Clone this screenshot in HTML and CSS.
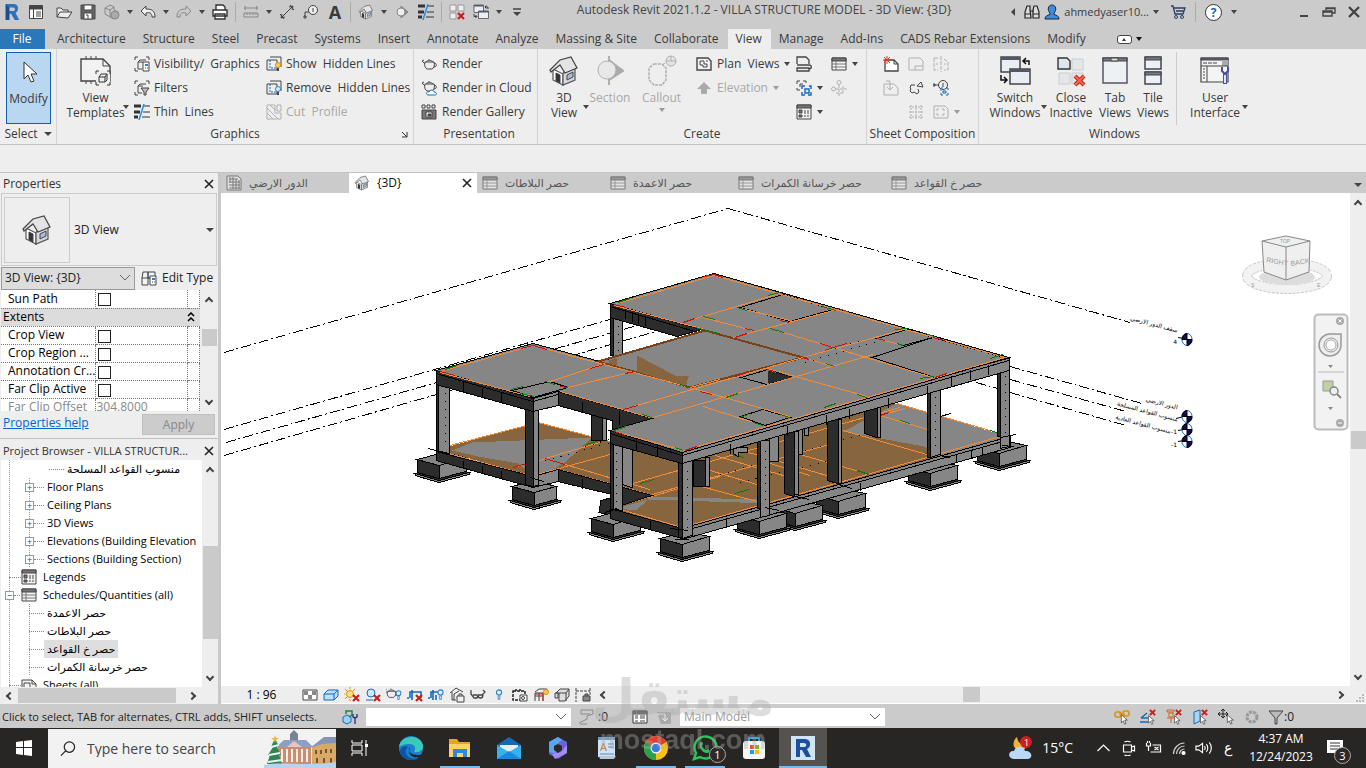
FILE: index.html
```html
<!DOCTYPE html>
<html lang="en">
<head>
    <meta charset="UTF-8">
    <meta name="viewport" content="width=device-width, initial-scale=1.0">
    <title>Autodesk Revit 2021.1.2 - VILLA STRUCTURE MODEL</title>
    <link rel="stylesheet" href="styles.css">
</head>
<body>
    <!-- shared icons -->
    <svg class="defs" aria-hidden="true">
        <symbol id="house" viewBox="0 0 32 32">
            <path d="M5 14v11l10 5V19z" fill="#fff" stroke="#555" stroke-width="1.2"/>
            <path d="M15 19v11l12-5V13l-5-7z" fill="#d5d9df" stroke="#555" stroke-width="1.2"/>
            <path d="M2 15L12 5 23 2l6 11-12 5-5-8-9 7z" fill="#e4e4e4" stroke="#444" stroke-width="1.2"/>
            <path d="M8 18l4 2v8l-4-2z" fill="#333"/>
            <path d="M19 20l6-3v5l-6 3z" fill="#a9bdd8"/>
        </symbol>
        <symbol id="sched" viewBox="0 0 16 16">
            <path d="M1 2h14v12H1z" fill="#f4f4f4" stroke="#444"/><path d="M1 2h14v3H1z" fill="#777" stroke="#444"/>
            <path d="M1 8h14M1 11h14M5 5v9" stroke="#777"/>
        </symbol>
        <symbol id="thin" viewBox="0 0 16 16">
            <path d="M0 2h7M0 8h6M0 13h4" stroke="#333" stroke-width="3"/><path d="M10 2h6M9 8h7M8 13h8" stroke="#333"/>
            <path d="M10 0L5 16" stroke="#2a8de0" stroke-width="1.5"/>
        </symbol>
        <symbol id="legend" viewBox="0 0 16 16">
            <path d="M1 1h14v14H1z" fill="#f2f2f2" stroke="#444"/><path d="M1 1h14v3H1z" fill="#777"/>
            <path d="M3 6h3v3H3zM3 11h3v2H3z" fill="#777"/><path d="M8 7h2m1 0h2M8 9h2m1 0h2M8 12h2m1 0h2" stroke="#444"/>
        </symbol>
        <symbol id="teapot" viewBox="0 0 16 16">
            <path d="M4 6c-1 3 0 6 2 7h5c2-1 3-4 2-7z" fill="#eee" stroke="#444"/><path d="M4 8L1 5M1 5l2-1M13 7c3 0 3 4 0 4M5 6c1-2 6-2 7 0M8 4v-1" stroke="#444"/>
        </symbol>
        <symbol id="x-red" viewBox="0 0 8 8"><path d="M1 1l6 6M7 1L1 7" stroke="#c81e1e" stroke-width="2.2"/></symbol>
        <symbol id="cursor" viewBox="0 0 12 16"><path d="M2 1v12l3-3 2 5 2-1-2-5h4z" fill="#fff" stroke="#333"/></symbol>
        <symbol id="bulb" viewBox="0 0 8 14"><circle cx="4" cy="4" r="3" fill="#dff0ff" stroke="#2a7fc8" stroke-width="1.3"/><path d="M3 8h2v4H3z" fill="#fff" stroke="#2a7fc8"/></symbol>
        <symbol id="switch" viewBox="0 0 32 32">
            <path d="M2 2h19v15H2z" fill="#e8eef4" stroke="#444" stroke-width="1.5"/><path d="M2 2h19v3H2z" fill="#556" stroke="none"/>
            <path d="M11 14h20v15H11z" fill="#e8eef4" stroke="#444" stroke-width="1.5"/><path d="M11 14h20v3H11z" fill="#556" stroke="none"/>
            <path d="M30 10V6h-6M27 3l-3 3 3 3M2 20v5h5M5 22l3 3-3 3" stroke="#111" stroke-width="1.5"/>
        </symbol>
        <symbol id="winlist" viewBox="0 0 16 16"><path d="M1 2h14v12H1z" fill="#fff" stroke="#333"/><path d="M1 2h14v3H1z" fill="#555"/><path d="M3 7h3M8 7h5M3 9h3M8 9h5M3 12h3M8 12h5" stroke="#444"/></symbol>
    </svg>

    <header class="titlebar">
        <div class="qat">
            <button class="tool" aria-label="Revit"><svg class="icon logo" viewBox="0 0 20 20"><path d="M3 1h9c6 0 6 8 2 10l4 8h-5l-4-7H7v7H3z" fill="#2b74bd"/><path d="M7 5h4c3 0 3 4 0 4H7z" fill="#cbcbcb"/><path d="M3 1l4 4v14H3z" fill="#1b4f8f"/></svg></button>
            <button class="tool" aria-label="Home"><svg class="icon" viewBox="0 0 16 16"><path d="M1.500 1.500h13v13h-13z" fill="#fff"/><path d="M2 2h12v3H2z" fill="#444"/><path d="M5.500 5v9M8 8h5M8 10h5M8 12h5"/></svg></button>
            <button class="tool open" aria-label="Open"><svg class="icon" viewBox="0 0 16 16"><path d="M1 13V4h4l2 2h5v2M1 13l3-5h12l-4 6z" fill="#eee"/></svg></button>
            <button class="tool" aria-label="Save"><svg class="icon" viewBox="0 0 16 16"><path d="M1 1h14v14H1z" fill="#666"/><path d="M4 1h8v5H4zM4 9h8v6H4z" fill="#fff"/><path d="M6 11h2v4"/></svg></button>
            <button class="tool" aria-label="Synchronize"><svg class="icon dim" viewBox="0 0 16 16"><path d="M1 4l5-3 4 2v3l4 2v5l-4 2-4-2-5-3zM6 6v7M1 4l5 2 4-3"/><circle cx="11" cy="11" r="4" fill="#aaa"/></svg></button>
            <i class="caret-slot"></i>
            <button class="tool" aria-label="Undo"><svg class="icon" viewBox="0 0 16 16"><path d="M6 2L1 7l5 5V9c4-1 6 0 6 4h3c0-6-3-8-9-8z" fill="#eee"/></svg></button>
            <i class="caret-slot"></i>
            <button class="tool" aria-label="Redo"><svg class="icon dim" viewBox="0 0 16 16"><path d="M10 2l5 5-5 5V9c-4-1-6 0-6 4H1c0-6 3-8 9-8z"/></svg></button>
            <i class="caret-slot"></i>
            <button class="tool" aria-label="Print"><svg class="icon" viewBox="0 0 16 16"><path d="M4 6V1h7l2 2v3M1 6h14v6H1zM3 10h10v5H3z" fill="#fff" stroke="#333" stroke-width="1.4"/></svg></button>
            <i class="sep"></i>
            <button class="tool" aria-label="Measure"><svg class="icon dim" viewBox="0 0 16 16"><path d="M1 4h14M3 2L1 4l2 2M13 2l2 2-2 2M1 9h14v4H1zM4 9v2M7 9v2M10 9v2M13 9v2"/></svg></button>
            <i class="caret-slot"></i>
            <button class="tool" aria-label="Aligned Dimension"><svg class="icon" viewBox="0 0 16 16"><path d="M2 14L14 2M1 10l4 5M11 1l4 5M2 14l1-4M2 14l4-1M14 2l-4 1M14 2l-1 4"/></svg></button>
            <button class="tool" aria-label="Tag"><svg class="icon" viewBox="0 0 16 16"><circle cx="10" cy="6" r="4.500" fill="#eee"/><path d="M10 4v4M6 8H2v5M1 12h2v2H1z"/></svg></button>
            <button class="tool letter" aria-label="Text">A</button>
            <i class="sep"></i>
            <button class="tool" aria-label="3D View"><svg class="icon"><use href="#house"/></svg></button>
            <i class="caret-slot"></i>
            <button class="tool" aria-label="Section"><svg class="icon dim" viewBox="0 0 16 16"><path d="M7 2l7 6-7 6z" fill="#888"/><circle cx="7" cy="8" r="4" fill="#eee"/></svg></button>
            <button class="tool" aria-label="Thin Lines"><svg class="icon"><use href="#thin"/></svg></button>
            <i class="sep"></i>
            <button class="tool" aria-label="Close Inactive"><svg class="icon" viewBox="0 0 16 16"><path d="M1 1h6v6H1zM9 1h6v6H9zM1 9h6v6H1z" stroke="#999" fill="#eee"/><use href="#x-red" x="8" y="8" width="8" height="8"/></svg></button>
            <button class="tool" aria-label="Switch Windows"><svg class="icon"><use href="#switch"/></svg></button>
            <i class="caret-slot"></i>
            <button class="tool" aria-label="Customize"><svg class="icon" viewBox="0 0 16 16"><path d="M4 5h8" stroke-width="1.5"/><path d="M4 8h8l-4 4z" fill="#444" stroke="none"/></svg></button>
        </div>
        <h1 class="doc-title">Autodesk Revit 2021.1.2 - VILLA STRUCTURE MODEL - 3D View: {3D}</h1>
        <div class="account">
            <i class="caret-left"></i>
            <button class="tool" aria-label="Search"><svg class="icon" viewBox="0 0 16 16"><path d="M3 2h3v4l1 8H1V8zM10 2h3l2 6v6H9V6z" fill="#ddd" stroke="#222" stroke-width="1.2"/><path d="M6 7h4M1 10h6M9 10h6" stroke="#222"/></svg></button>
            <button class="user"><svg class="icon" viewBox="0 0 16 16"><path d="M1 15c0-3 3-4 5-4.500V9c-3-3-2-8 2-8s5 5 2 8v1.500c2 .5 5 1.500 5 4.500z" fill="#3b8de0" stroke="#223"/></svg>ahmedyaser10...<i class="caret"></i></button>
            <button class="tool cart" aria-label="App Store"><svg class="icon" viewBox="0 0 16 16"><path d="M1 2h2l2 8h8l2-6H4M6 7h8" stroke="#2c3f66" stroke-width="1.3"/><circle cx="6" cy="13" r="1.500" stroke="#2c3f66"/><circle cx="12" cy="13" r="1.500" stroke="#2c3f66"/></svg></button>
            <i class="sep"></i>
            <button class="help" aria-label="Help">?</button>
            <i class="caret"></i>
            <span class="win-buttons">
                <button class="tool" aria-label="Minimize"><svg class="icon" viewBox="0 0 16 16"><path d="M4 12h8" stroke-width="2"/></svg></button>
                <button class="tool" aria-label="Restore"><svg class="icon" viewBox="0 0 16 16"><path d="M5 6V4h9v5h-3M2 7h9v5H2zM2 8h9M5 4.500h9" stroke-width="1.400"/></svg></button>
                <button class="tool" aria-label="Close"><svg class="icon" viewBox="0 0 16 16"><path d="M3 3l10 10M13 3L3 13" stroke-width="2.400"/></svg></button>
            </span>
        </div>
    </header>

    <nav class="tabs">
        <button class="tab file">File</button>
        <button class="tab">Architecture</button>
        <button class="tab">Structure</button>
        <button class="tab">Steel</button>
        <button class="tab">Precast</button>
        <button class="tab">Systems</button>
        <button class="tab">Insert</button>
        <button class="tab">Annotate</button>
        <button class="tab">Analyze</button>
        <button class="tab">Massing &amp; Site</button>
        <button class="tab">Collaborate</button>
        <button class="tab active">View</button>
        <button class="tab">Manage</button>
        <button class="tab">Add-Ins</button>
        <button class="tab">CADS Rebar Extensions</button>
        <button class="tab">Modify</button>
        <button class="collapse" aria-label="Minimize ribbon"><span class="collapse-box"></span><i class="caret dark"></i></button>
    </nav>

    <div class="ribbon">
        <section class="panel select-panel">
            <div class="panel-body">
                <button class="big modify"><svg class="icon32" viewBox="0 0 32 32"><path d="M11 6v17l4-4 3 7 3-1-3-7h6z" fill="#fff" stroke="#333"/></svg><span>Modify</span></button>
            </div>
            <h2 class="panel-title">Select <i class="caret wide"></i></h2>
        </section>
        <section class="panel graphics">
            <div class="panel-body">
                <button class="big templates"><svg class="icon32" viewBox="0 0 32 32"><path d="M1 4h22l7 7v15H1z" fill="#f2f2f2" stroke="#444" stroke-width="1.400"/><path d="M23 4v7h7M6 4V1M11 4V1M16 4V1M6 26v3M11 26v3" stroke="#444"/><path d="M16 16h14v14H16z" fill="#eee" stroke="none"/><path d="M16 19v-3h3M27 16h3v3M30 27v3h-3M19 30h-3v-3M19 22l2-3h6v6l-2 2h-6zM19 22h6v5M25 22l2-3" stroke="#333"/></svg><span>View<br>Templates</span></button>
                <i class="caret low"></i>
                <div class="rows vg">
                    <button class="row"><svg class="icon" viewBox="0 0 16 16"><path d="M1 4V1h3M12 1h3v3M1 12v3h3M4 6l2-2h6M4 6v7h4M4 6h5"/><path d="M9 6h6v9H9z" fill="#fff"/><path d="M11 8h3v2h-3z" fill="#2a7fc8" stroke="none"/><path d="M11 12h1m1 0h1"/></svg>Visibility/ &nbsp;Graphics</button>
                    <button class="row"><svg class="icon" viewBox="0 0 16 16"><path d="M1 4V1h3M12 1h3v3M1 12v3h3M4 6l2-2h6M4 6v7h4M4 6h5"/><path d="M7 8h8l-3 4v3h-2v-3z" fill="#bbb"/></svg>Filters</button>
                    <button class="row"><svg class="icon"><use href="#thin"/></svg>Thin &nbsp;Lines</button>
                </div>
                <div class="rows">
                    <button class="row"><svg class="icon" viewBox="0 0 16 16"><path d="M1 4h10v10H1zM4 1h11v10" fill="#eee"/><path d="M4 4v8h6" stroke="#1269c0" stroke-dasharray="2 1"/><circle cx="12" cy="9" r="2.500" fill="#ffd24d" stroke="#e0860c"/><path d="M12 12v3" stroke-width="2"/></svg>Show &nbsp;Hidden Lines</button>
                    <button class="row"><svg class="icon" viewBox="0 0 16 16"><path d="M1 4h10v10H1zM4 1h11v10" fill="#eee"/><path d="M4 4v8h6" stroke="#1269c0" stroke-dasharray="2 1"/><circle cx="12" cy="9" r="2.500" fill="#dff0ff" stroke="#2a7fc8"/><path d="M12 12v3" stroke-width="2"/></svg>Remove &nbsp;Hidden Lines</button>
                    <button class="row" disabled><svg class="icon faint" viewBox="0 0 16 16"><path d="M1 1h8v8h6v6H1zM11 1h4v6h-4zM1 4l11 11M1 9l6 6M4 1l5 5"/></svg>Cut &nbsp;Profile</button>
                </div>
            </div>
            <h2 class="panel-title">Graphics <svg class="launcher" viewBox="0 0 8 8"><path d="M1 2l5 5M6 2v5H1" stroke="#333" fill="none"/></svg></h2>
        </section>
        <section class="panel presentation">
            <div class="panel-body">
                <div class="rows">
                    <button class="row"><svg class="icon"><use href="#teapot"/></svg>Render</button>
                    <button class="row"><svg class="icon" viewBox="0 0 16 16"><use href="#teapot" y="-2" width="16" height="16"/><path d="M7 15c-3-1-1-4 1-3 1-3 5-2 5 0 3 0 3 3 1 3z" fill="#fff" stroke="#1269c0"/></svg>Render in Cloud</button>
                    <button class="row"><svg class="icon" viewBox="0 0 16 16"><path d="M1 1h3v3H1zM6 1h3v3H6zM11 1h3v3h-3z"/><path d="M1 6h14v9H1z" fill="#777"/><path d="M5 8h6v5H5z" fill="#fff"/><path d="M7 10h3v2H7z" fill="#444"/></svg>Render Gallery</button>
                </div>
            </div>
            <h2 class="panel-title">Presentation</h2>
        </section>
        <section class="panel create">
            <div class="panel-body">
                <button class="big view3d"><svg class="icon32"><use href="#house"/></svg><span>3D<br>View</span></button>
                <i class="caret low"></i>
                <button class="big section" disabled><svg class="icon32 faint" viewBox="0 0 32 32"><path d="M15 1v6l13 8-13 8v7" fill="none" stroke-width="2"/><path d="M16 5l14 11-14 9z" fill="#aaa"/><circle cx="13" cy="15" r="9" fill="#e8e8e8"/></svg><span>Section</span></button>
                <button class="big callout" disabled><svg class="icon32 faint" viewBox="0 0 32 32"><path d="M8 9h8l4 4v12l-4 5H8l-5-5V13z" stroke-dasharray="3 1" stroke-width="1.500"/><circle cx="25" cy="6" r="5" fill="#e4e4e4"/><path d="M20 6h10M25 1v5M19 8l-3 2"/></svg><span>Callout</span><i class="caret pale"></i></button>
                <div class="rows plans">
                    <button class="row"><svg class="icon" viewBox="0 0 16 16"><path d="M1 2h11l3 3v9H1z" fill="#f4f4f4" stroke-width="1.400"/><path d="M4 5h4v3h3v3H7V9H4zM10 5h2"/></svg>Plan &nbsp;Views<i class="caret"></i></button>
                    <button class="row" disabled><svg class="icon" viewBox="0 0 16 16"><path d="M8 2l7 7h-4v5H5V9H1z" fill="#aaa" stroke="none"/></svg>Elevation<i class="caret pale"></i></button>
                </div>
                <div class="rows narrow">
                    <button class="row" aria-label="Drafting View"><svg class="icon" viewBox="0 0 16 16"><path d="M1 8V1h9l3 3v4M1 9h12M1 12h12v3H1zM13 9c3 0 3 4 0 4" fill="#eee" stroke-width="1.300"/></svg></button>
                    <button class="row" aria-label="Duplicate View"><svg class="icon" viewBox="0 0 16 16"><path d="M1 4V1h3M7 1h3v2M1 8v2h3M4 4h3M4 4v3"/><path d="M6 9V6h3M13 6h2v3M15 12v3h-3M9 15H6v-3M9 9h4v4H9z" stroke="#1269c0" stroke-width="1.400"/></svg><i class="caret"></i></button>
                    <button class="row" aria-label="Legends"><svg class="icon"><use href="#legend"/></svg><i class="caret"></i></button>
                </div>
                <div class="rows narrow">
                    <button class="row" aria-label="Schedules"><svg class="icon"><use href="#sched"/></svg><i class="caret"></i></button>
                    <button class="row" aria-label="Scope Box" disabled><svg class="icon faint" viewBox="0 0 16 16"><circle cx="8" cy="2.500" r="2"/><circle cx="2.500" cy="9" r="2"/><path d="M8 5v11M5 9h11M5 13h7M12 6v7" stroke-dasharray="3 1"/></svg></button>
                </div>
            </div>
            <h2 class="panel-title">Create</h2>
        </section>
        <section class="panel sheet">
            <div class="panel-body">
                <button class="cell" aria-label="Sheet"><svg class="icon" viewBox="0 0 16 16"><path d="M2 15V4h9l4 4v7z" fill="#fff" stroke-width="1.300"/><path d="M11 4v4h4"/><path d="M4 0v8M0 4h8M1 1l6 6M7 1L1 7" stroke="#d2451e"/></svg></button>
                <button class="cell" aria-label="Title Block" disabled><svg class="icon faint" viewBox="0 0 16 16"><path d="M1 2h11l3 3v9H1zM7 10h8M7 10v4"/></svg></button>
                <button class="cell" aria-label="Matchline" disabled><svg class="icon faint" viewBox="0 0 16 16"><path d="M1 2h4M1 2v12h4M11 3l4 3v8h-4M8 0v16M11 8h2M3 8h2" stroke-dasharray="4 1"/></svg></button>
                <button class="cell" aria-label="View Reference" disabled><svg class="icon faint" viewBox="0 0 16 16"><path d="M1 4h10l4 4v7H1zM3 1h4v8M4 7l3 3 3-3"/></svg></button>
                <button class="cell" aria-label="Revisions"><svg class="icon" viewBox="0 0 16 16"><path d="M7 5H3L2 8l1 1-1 2 2 2 2-1 3 2 2-2-1-3M9 6l4-4 2 5z"/></svg></button>
                <button class="cell" aria-label="Viewports"><svg class="icon" viewBox="0 0 16 16"><circle cx="10" cy="5" r="4.500"/><path d="M10 3v4M1 5h5M0 4h2v2H0z"/><path d="M8 11V8h2M13 8h2v2M15 13v2h-2M10 15H8v-2M10 11h3v2h-3z" fill="#eee" stroke="#1269c0"/></svg></button>
                <button class="cell" aria-label="Guide Grid" disabled><svg class="icon faint" viewBox="0 0 16 16"><path d="M1 3h14M1 8h14M1 13h14M3 1v14M8 1v14M13 1v14" stroke-dasharray="2 1"/></svg></button>
                <button class="cell caret-cell" aria-label="Sheet Views" disabled><svg class="icon faint" viewBox="0 0 16 16"><path d="M1 2h11l3 3v9H1zM4 7V5h2M9 5h2v2M11 9v2H9M6 11H4V9"/></svg><i class="caret pale"></i></button>
            </div>
            <h2 class="panel-title">Sheet Composition</h2>
        </section>
        <section class="panel windows">
            <div class="panel-body">
                <button class="big switch"><svg class="icon32"><use href="#switch"/></svg><span>Switch<br>Windows</span></button>
                <i class="caret low"></i>
                <button class="big inactive"><svg class="icon32" viewBox="0 0 32 32"><path d="M17 4h11v11H17zM4 18h11v11H4zM17 18h11v11H17z" fill="#e4e7ea" stroke="#ccc"/><path d="M3 3h9l3 3v8H3z" fill="#dde6ee" stroke="#333" stroke-width="1.400"/><path d="M20 21l9 9M29 21l-9 9" stroke="#c02a1c" stroke-width="4"/><path d="M20 21l9 9M29 21l-9 9" stroke="#f26450" stroke-width="2"/></svg><span>Close<br>Inactive</span></button>
                <button class="big tabv"><svg class="icon32" viewBox="0 0 32 32"><path d="M4 3h24v25H4z" fill="#eef1f4" stroke="#556" stroke-width="1.500"/><path d="M4 3h24v3H4z" fill="#778"/><path d="M12 3h7v3h-7z" fill="#ddd"/></svg><span>Tab<br>Views</span></button>
                <button class="big tile"><svg class="icon32" viewBox="0 0 32 32"><path d="M8 2h16v12H8zM8 17h16v12H8z" fill="#eef1f4" stroke="#445" stroke-width="1.500"/><path d="M8 2h16v3H8zM8 17h16v3H8z" fill="#778"/></svg><span>Tile<br>Views</span></button>
                <i class="divider"></i>
                <button class="big ui"><svg class="icon32" viewBox="0 0 32 32"><path d="M2 3h27v24H2z" fill="#f4f4f4" stroke="#444" stroke-width="1.200"/><path d="M2 3h27v2H2z" fill="#667"/><path d="M23 5h6v6h-6z" fill="#aaa" stroke="none"/><path d="M2 11h27M8 11v16M4 8h4m1 0h4m1 0h4M4 14h2M4 17h2M4 20h2M4 23h2" stroke="#444"/><path d="M26 18v11" stroke="#4a4f9a" stroke-width="4"/><path d="M26 18v10" stroke="#dfe3f4" stroke-width="2"/><path d="M23 12v4l3 3 3-3v-4" stroke="#4a4f9a" stroke-width="2"/></svg><span>User<br>Interface</span></button>
                <i class="caret low"></i>
            </div>
            <h2 class="panel-title">Windows</h2>
        </section>
    </div>
    <div class="options-bar"></div>

    <main class="workspace">
        <aside class="side">
            <section class="properties">
                <header class="palette-head"><h2>Properties</h2><button class="close" aria-label="Close Properties"><svg viewBox="0 0 10 10"><path d="M1 1l8 8M9 1L1 9"/></svg></button></header>
                <button class="type-selector"><span class="thumb"><svg class="icon32"><use href="#house"/></svg></span>3D View<i class="caret wide"></i></button>
                <div class="instance">
                    <select aria-label="Instance"><option>3D View: {3D}</option></select>
                    <button class="edit-type"><svg class="icon" viewBox="0 0 16 16"><path d="M1 8l1-6h5v13H1zM7 2h7v6H7zM1 8h8" fill="#f4f4f4"/><path d="M9 6h6v9H9z" fill="#fff"/><path d="M11 8h3v2h-3z" fill="#2a7fc8" stroke="none"/><path d="M11 12h1m1 0h1"/></svg>Edit Type</button>
                </div>
                <div class="grid-wrap">
                    <div class="grid-clip">
                    <table class="grid">
                        <tr><th><label for="sun">Sun Path</label></th><td><input type="checkbox" id="sun"></td><td class="assoc"></td></tr>
                        <tr class="group"><th colspan="2">Extents</th><td class="assoc"><svg viewBox="0 0 8 10"><path d="M1 4l3-3 3 3M1 9l3-3 3 3" fill="none" stroke="#000" stroke-width="1.500"/></svg></td></tr>
                        <tr><th><label for="crop">Crop View</label></th><td><input type="checkbox" id="crop"></td><td class="assoc"></td></tr>
                        <tr><th><label for="region">Crop Region ...</label></th><td><input type="checkbox" id="region"></td><td class="assoc"></td></tr>
                        <tr><th><label for="anno">Annotation Cr...</label></th><td><input type="checkbox" id="anno"></td><td class="assoc"></td></tr>
                        <tr><th><label for="far">Far Clip Active</label></th><td><input type="checkbox" id="far"></td><td class="assoc"></td></tr>
                        <tr class="off"><th>Far Clip Offset</th><td>304.8000</td><td class="assoc"></td></tr>
                    </table>
                    </div>
                    <div class="vscroll"><i class="arrow up"></i><i class="thumb-bar short"></i><i class="arrow down"></i></div>
                </div>
                <footer class="prop-foot"><a href="#">Properties help</a><button disabled>Apply</button></footer>
            </section>
            <section class="browser">
                <header class="palette-head"><h2>Project Browser - VILLA STRUCTUR...</h2><button class="close" aria-label="Close Project Browser"><svg viewBox="0 0 10 10"><path d="M1 1l8 8M9 1L1 9"/></svg></button></header>
                <div class="tree-wrap">
                    <ul class="tree">
                        <li class="l3"><i class="dots"></i><span>منسوب القواعد المسلحة</span></li>
                        <li class="l2"><i class="box">+</i><i class="dots"></i><span>Floor Plans</span></li>
                        <li class="l2"><i class="box">+</i><i class="dots"></i><span>Ceiling Plans</span></li>
                        <li class="l2"><i class="box">+</i><i class="dots"></i><span>3D Views</span></li>
                        <li class="l2"><i class="box">+</i><i class="dots"></i><span>Elevations (Building Elevation</span></li>
                        <li class="l2"><i class="box">+</i><i class="dots"></i><span>Sections (Building Section)</span></li>
                        <li class="l1"><i class="dots"></i><svg class="icon"><use href="#legend"/></svg><span>Legends</span></li>
                        <li class="l1 open-node"><i class="box">−</i><i class="dots tiny"></i><svg class="icon"><use href="#sched"/></svg><span>Schedules/Quantities (all)</span></li>
                        <li class="l2 leaf"><i class="dots"></i><span>حصر الاعمدة</span></li>
                        <li class="l2 leaf"><i class="dots"></i><span>حصر البلاطات</span></li>
                        <li class="l2 leaf"><i class="dots"></i><span class="selected">حصر خ القواعد</span></li>
                        <li class="l2 leaf"><i class="dots"></i><span>حصر خرسانة الكمرات</span></li>
                        <li class="l1"><i class="dots"></i><svg class="icon" viewBox="0 0 16 16"><path d="M1 3h10l4 4v8H1z" fill="#f4f4f4"/><path d="M3 6h6v5H3zM11 3v4h4"/></svg><span>Sheets (all)</span></li>
                    </ul>
                    <div class="vscroll"><i class="arrow up"></i><i class="thumb-bar tall"></i><i class="arrow down"></i></div>
                </div>
                <div class="hscroll"><i class="arrow left"></i><i class="thumb-bar"></i><i class="arrow right"></i></div>
            </section>
        </aside>

        <section class="view-area">
            <nav class="view-tabs">
                <button class="vtab"><svg class="icon soft" viewBox="0 0 16 16"><path d="M1 1h11l3 3v11H1z" fill="#eee"/><path d="M3 4h9M3 7h11M3 10h11M3 13h11M4 2v6M7 2v12M10 4v10M13 5v9"/></svg>الدور الارضي</button>
                <button class="vtab active"><svg class="icon"><use href="#house"/></svg>{3D}<span class="close"><svg viewBox="0 0 10 10"><path d="M1 1l8 8M9 1L1 9"/></svg></span></button>
                <button class="vtab"><svg class="icon soft"><use href="#sched"/></svg>حصر البلاطات</button>
                <button class="vtab"><svg class="icon soft"><use href="#sched"/></svg>حصر الاعمدة</button>
                <button class="vtab long"><svg class="icon soft"><use href="#sched"/></svg>حصر خرسانة الكمرات</button>
                <button class="vtab"><svg class="icon soft"><use href="#sched"/></svg>حصر خ القواعد</button>
                <button class="tab-menu" aria-label="Tab list"><i class="caret wide"></i></button>
            </nav>
            <div class="canvas-row">
                <div class="canvas">
                    <svg class="model" viewBox="221 193 1129 492" role="img" aria-label="Villa structure">
                        <defs>
                            <g id="footing">
                                <path d="M-24-8L4-16 30-9 0-1z" class="dk"/>
                                <path d="M-24-8v2L0 1 30-7v-2L0-1z" class="lt"/>
                                <path d="M-22-22L0-16V-3l-22-6z" class="dk"/>
                                <path d="M0-16l27-8v14L0-3z" class="lt"/>
                                <path d="M-22-22L5-29l22 5L0-16z" class="lt"/>
                            </g>
                            <g id="footing-small">
                                <path d="M-24-8L2-15 26-8 0-1z" class="dk"/>
                                <path d="M-24-8v2L0 1 26-6v-2L0-1z" class="lt"/>
                                <path d="M-22-22L0-16V-3l-22-6z" class="dk"/>
                                <path d="M0-16l22-6v13L0-3z" class="lt"/>
                                <path d="M-22-22L0-28l22 6L0-16z" class="lt"/>
                            </g>
                            <g id="level"><ellipse rx="5" ry="6" fill="#fff" stroke="#1470c8"/><path d="M0 0V-6A5 6 0 0 0-5 0zM0 0V6A5 6 0 0 0 5 0z" fill="#140a50"/></g>
                        </defs>
                        <!-- level lines -->
                        <g class="levels">
                            <path d="M224 352L728 208 1130 322"/>
                            <path d="M224 429L610 319"/><path d="M226 442L637 325"/><path d="M224 455L656 331"/>
                            <path d="M1010 366L1142 403"/><path d="M1010 379L1126 411"/><path d="M1010 392L1126 425"/><path d="M976 382l22 6"/>
                        </g>
                        <g class="solid">
                            <use href="#footing" x="439" y="481"/>
                            <use href="#footing-small" x="534" y="508"/>
                            <path d="M601 500l11-3v18l-13-3z" class="dk"/>
                            <use href="#footing" x="613" y="540"/>
                            <use href="#footing" x="838" y="517"/>
                            <use href="#footing" x="795" y="529"/>
                            <use href="#footing" x="759" y="537"/>
                            <use href="#footing" x="930" y="489"/>
                            <use href="#footing" x="999" y="469"/>
                            <use href="#footing" x="682" y="560"/>
                        </g>
                        <!-- ground floor slab -->
                        <path d="M438 449L538 422 610 441 640 430 897 403 1010 437 682 529 610 508 652 495 558 469 533 476z" fill="#86653f"/>
                        <g fill="#868686">
                            <path d="M472 442L592 437 565 462 550 470 533 474 505 462 452 450z"/>
                            <path d="M843 431L897 403 1008 436 940 456 924 446z"/>
                            <path d="M617 508L648 499 636 510zM648 496l110 3 12 4-122-4z"/>
                        </g>
                        <path d="M438 449l80 14 15 11-90-23z" fill="#86653f"/>
                        <g class="orange">
                            <path d="M446 446L538 422 610 441M545 458L600 442M533 475L625 450M565 464L650 489M513 467L550 457M445 452L530 475M562 470L650 494"/>
                            <path d="M617 508L682 527 1000 436M614 507L720 476M622 486L900 407M652 494L840 441M700 467L757 484M715 455L790 477M735 448L830 476M770 463L810 475M800 454L870 474M843 430L927 454M880 415L928 429M897 403L997 432M880 415L905 408M690 483L757 501"/>
                        </g>
                        <path d="M545 458L565 464M513 467l20-6M925 453l8 2M693 486l17-5M880 415l9-3" class="red"/>
                        <path d="M586 444l14-4M640 483l14-4M732 454l12 3M857 470l12 4M900 420l10 3M735 493l14-4M990 430l7 2" class="green"/>
                        <path d="M585 446L650 428M600 441L680 462M720 474l160-45M740 482l90-22M545 460l60-16" class="specks"/>
                        <!-- ground beams -->
                        <g class="solid">
                            <path d="M436 451L533 476V487L436 460z" class="dk"/>
                            <path d="M533 476L558 469V481L533 487z" class="lt"/>
                            <path d="M558 469L652 495 612 508V494L558 481z" class="dk"/>
                            <path d="M591 415h11v25h-11z" class="dk"/><path d="M602 418h4v22h-4z" class="lt"/>
                            <path d="M622 445h10v42l-10-3z" class="lt"/>
                            <path d="M693 460h12v26h-12z" class="dk"/><path d="M705 457h4v29h-4z" class="lt"/>
                            <path d="M733 447h14v5h-9v4l-5-3z" class="lt"/><path d="M769 435h9v26h-9z" class="lt"/>
                            <path d="M798 428h4v26h-4zM804 427h4v8h-4z" class="lt"/>
                            <path d="M864 408h13v29l-13-4z" class="dk"/><path d="M877 406h3v31h-3z" class="lt"/>
                            <path d="M610 508L682 528V538L610 518z" class="dk"/>
                            <path d="M682 528L1010 436V447L682 539z" class="lt"/>
                            <path d="M682 531L1010 439" class="ln"/>
                            <!-- columns -->
                            <path d="M436 383h13v70l-13-3z" class="lt"/><path d="M436 383h2v68h-2z" class="dk"/>
                            <path d="M525 408h8v78l-8-2z" class="dk"/><path d="M533 408h5v77l-5 1z" class="lt"/>
                            <path d="M610 440h12v70l-12-2z" class="lt"/><path d="M610 440h3v69h-3z" class="dk"/>
                            <path d="M678 460h4v77h-4z" class="dk"/><path d="M682 460h10v75l-10 3z" class="lt"/>
                            <path d="M757 440h3v68h-3z" class="dk"/><path d="M760 440h9v75l-9 2z" class="lt"/>
                            <path d="M784 431h10v65l-10-3z" class="dk"/><path d="M794 431h4v63h-4z" class="lt"/>
                            <path d="M827 419h11v64l-11-3z" class="dk"/><path d="M838 419h3v64h-3z" class="lt"/>
                            <path d="M927 391h3v66h-3z" class="dk"/><path d="M930 390h10v64l-10 3z" class="lt"/>
                            <path d="M997 371h3v65h-3z" class="dk"/><path d="M1000 368h9v78l-9 2z" class="lt"/>
                            <path d="M610 316h3v39h-3z" class="dk"/><path d="M613 316h9v38l-9 2z" class="lt"/>
                            <!-- roof beams -->
                            <path d="M436 370L533 398V411L436 384z" class="dk"/>
                            <path d="M533 397L558 391V405L533 411z" class="lt"/>
                            <path d="M558 391L652 418 612 431V420L558 405z" class="dk"/>
                            <path d="M610 430L682 452V463L610 443z" class="dk"/>
                            <path d="M682 452L1009 357V370L682 463z" class="lt"/>
                            <path d="M610 303L702 329 677 336 610 317z" class="dk"/>
                            <!-- roof slab -->
                            <path d="M436 370L533 343 600 361 705 330 610 303 714 273 1009 357 682 452 610 430 652 418 558 391 533 398z" class="lt"/>
                        </g>
                        <path d="M682 455L1009 360M436 373L533 401 558 394M610 433L682 455M610 306l85 25" class="ln"/>
                        <path d="M463 381v10M482 387v10M501 392v10M582 401v11M619 410v14M636 436v13M657 442v13M730 443v10M787 425v10M826 414v10M849 408v10M888 397v10M927 385v10M951 375v10M970 369v10M988 364v10M625 308v10M632 311v10M638 313v10M645 315v10" class="ln"/>
                        <path d="M726 519v8M860 482v8M956 454v8M971 449v8M982 446v8M463 460v8M482 465v8M501 470v8M582 478v10M650 520v8" class="ln"/>
                        <path d="M598 361L705 330 803 357 690 387z" class="recess"/>
                        <path d="M609 360l8-3v8l-8-2zM637 355l38 20h14l-3 10-24-6-25-8z" fill="#86653f"/>
                        <path d="M740 307L783 294 833 309 790 321zM877 338L907 329 933 337 903 345zM872 357L933 337 1008 358 935 377zM740 416L763 409 790 417 765 425zM512 390L550 381 568 387 533 397zM741 377L768 369 793 377 767 384z" class="ln"/>
                        <path d="M768 370L793 377 768 383z" class="hole"/>
                        <g class="orange">
                            <path d="M440 371L533 345 690 387M614 304L714 275 1005 357 684 450 614 431M547 382L605 363M568 387L633 371M623 409L803 357 907 328M653 417L863 357 873 354M440 372L530 396"/>
                            <path d="M683 322L780 293M733 337L837 309M703 317L753 330M770 328L933 377M737 307L790 320M877 338L903 345M803 357L833 366M767 368L867 396M690 387L790 416M703 406L763 425M560 391L650 417M690 387L720 379M614 305L705 329"/>
                        </g>
                        <path d="M521 348l12-3 14 4M440 371l15 4M590 368l14-4M625 373l10-2M623 409l15-4M614 304l12 3M704 276l10-2 9 3M683 322l12-4M735 337l12-4M745 328l9 2M780 320l9 2M820 343l13 4 14-4M877 338l8 2M933 337l12 3M803 357l6 2M735 376l12-4M700 391l12 3M935 377l12-4M560 386l8 1M614 431l10 3M685 450l12-4M767 369l8 2M838 308l10 3" class="red"/>
                        <path d="M445 369l12-4M511 389l12-3M545 381l10 3M520 393l14 3M642 414l10 3M618 302l12-4M703 316l12 3M695 327l24 6M690 387l-10-3M737 307l10 3M768 295l12-3M822 306l14 4M770 328l14 4M825 350l8-3M895 329l12-1M925 333l10 3M897 343l6 2M920 378l14-2M990 358l13-4M826 363l8 3M857 394l10 3M824 407l12-4M726 397l12-4M740 417l8-3M753 422l10 3M780 414l10 3M675 447l8 3M614 430l12-4" class="green"/>
                        <path d="M805 362L880 340M835 348l30-9" class="specks"/>
                        <path d="M445 392v55M616 452v50M687 470v58M765 450v58M935 396v54M1005 375v62M618 325v28" class="specks"/>
                        <path d="M428 448l17 4M530 477l14 4M605 512l12-4M670 528l18 2M765 507l14 3M795 496l14 3M838 484l14 4M940 455l10 2M1000 437l16-3M1002 445l12 1M940 416l11-3M675 539h14" class="ln"/>
                        <g class="marks">
                            <path d="M1178 337l6 1M1176 418l8-2M1178 430l6-1M1178 441l6-1"/>
                            <use href="#level" x="1187" y="339"/><use href="#level" x="1187" y="416"/><use href="#level" x="1187" y="429"/><use href="#level" x="1187" y="441"/>
                            <text x="1177" y="332" transform="rotate(15 1177 332)">سقف الدور الارضي</text><text x="1177" y="343">4</text>
                            <text x="1177" y="409" transform="rotate(15 1177 409)">الدور الارضي</text>
                            <text x="1177" y="421" transform="rotate(15 1177 421)">منسوب القواعد المسلحة</text><text x="1177" y="433">-1</text>
                            <text x="1170" y="433" transform="rotate(15 1170 433)">منسوب القواعد العادية</text><text x="1177" y="446">-1</text>
                        </g>
                    </svg>
                    <div class="viewcube">
                        <svg viewBox="0 0 94 64"><ellipse cx="47" cy="42" rx="40" ry="13" fill="none" stroke="#ccc" stroke-width="10" stroke-dasharray="3 1"/><ellipse cx="47" cy="42" rx="40" ry="13" fill="none" stroke="#f2f2f2" stroke-width="8"/><ellipse cx="47" cy="43" rx="28" ry="8" fill="#ddd"/>
                            <path d="M22 7l24-5 24 5-1 31-23 8-22-8z" fill="#efefef" stroke="#888"/><path d="M22 7l24 6 24-6M46 13v33" fill="none" stroke="#888"/>
                            <g class="cube-text"><text x="26" y="28" transform="rotate(10 26 28)">RIGHT</text><text x="51" y="32" transform="rotate(-10 51 32)">BACK</text><text x="40" y="9" class="tiny">TOP</text><text x="11" y="53" class="tiny">S</text><text x="77" y="53" class="tiny">E</text></g></svg>
                    </div>
                    <div class="navbar">
                        <svg viewBox="0 0 36 118"><rect x="1.500" y="1.500" width="33" height="115" rx="4" fill="#f2f2f2" stroke="#bbb" stroke-width="2"/>
                            <circle cx="27" cy="8" r="4" fill="#aaa"/><path d="M25.500 6.500l3 3m0-3l-3 3" stroke="#fff"/>
                            <path d="M17 21h11v12a11 11 0 1 1-11-12z" fill="#eee" stroke="#999" stroke-width="1.500"/><circle cx="18" cy="32" r="7" fill="none" stroke="#999"/><circle cx="18" cy="32" r="5" fill="#fff" stroke="#aaa"/><path d="M15 52h5l-2.500 3zM15 94h5l-2.500 3z" fill="#888"/>
                            <path d="M5 59h26" stroke="#bbb"/><path d="M10 68h10v10H10z" fill="#c2cfa2" stroke="#999"/><circle cx="21" cy="78" r="4" fill="#eee" stroke="#888" stroke-width="1.500"/><path d="M24 81l4 4" stroke="#888" stroke-width="2"/>
                            <circle cx="27" cy="110" r="4" fill="#aaa"/><path d="M25 110h4" stroke="#fff"/></svg>
                    </div>
                </div>
                <div class="vscroll page"><i class="arrow up"></i><i class="thumb-bar mid"></i><i class="arrow down"></i></div>
            </div>
            <div class="view-control">
                <button class="scale">1 : 96</button>
                <button aria-label="Detail Level"><svg class="icon" viewBox="0 0 16 16"><path d="M1 3h14v10H1z" fill="#fff"/><path d="M2 4h4v4H2zM10 4h4v4h-4zM6 8h4v4H6z" fill="#888" stroke="none"/></svg></button>
                <button aria-label="Visual Style"><svg class="icon blue" viewBox="0 0 16 16"><path d="M1 7l4-4h10v6l-4 4H1zM1 7h10v6M11 7l4-4" fill="#bfe0fa"/></svg></button>
                <button aria-label="Sun Path"><svg class="icon" viewBox="0 0 16 16"><circle cx="6" cy="7" r="3.500" fill="#ffe27a" stroke="#e08a10"/><path d="M6 0v2M6 12v2M0 7h1M1 2l2 2M11 2L9 4M1 12l2-2" stroke="#e08a10"/><use href="#x-red" x="8" y="7" width="8" height="8"/></svg></button>
                <button aria-label="Shadows"><svg class="icon blue" viewBox="0 0 16 16"><circle cx="6" cy="6" r="4" fill="#cfe8fb"/><path d="M1 13h7"/><use href="#x-red" x="8" y="7" width="8" height="8"/></svg></button>
                <button aria-label="Rendering"><svg class="icon" viewBox="0 0 16 16"><use href="#teapot" x="-2" y="-2" width="14" height="16"/><use href="#bulb" x="9" y="3" width="7" height="11"/></svg></button>
                <button aria-label="Crop View"><svg class="icon blue" viewBox="0 0 16 16"><path d="M0 11h2m1 0V5h11M5 3v10M5 5h9v6" stroke-width="1.600"/><use href="#x-red" x="8" y="7" width="8" height="8"/></svg></button>
                <button aria-label="Crop Region"><svg class="icon blue" viewBox="0 0 16 16"><path d="M0 11h2m1 0V5h7M5 3v10M8 8v5" stroke-width="1.600"/><use href="#bulb" x="9" y="2" width="7" height="12"/></svg></button>
                <button aria-label="Lock View"><svg class="icon" viewBox="0 0 16 16"><path d="M1 6l6-5 7 4M3 5v8h4M5 13V7l5-3"/><path d="M8 9h7v6H8zM10 9V7h3v2" fill="#eee"/></svg></button>
                <button aria-label="Hide"><svg class="icon" viewBox="0 0 16 16"><path d="M1 3v4l3 4h3l1-3h4l3-3-2-2M3 8h4M8 8c0 4 5 4 5 0" stroke-width="1.300"/></svg></button>
                <button aria-label="Reveal Hidden"><svg class="icon" viewBox="0 0 16 16"><use href="#bulb" x="4" y="2" width="8" height="12"/></svg></button>
                <button aria-label="View Properties"><svg class="icon" viewBox="0 0 16 16"><path d="M1 4h12v9H1zM4 2v2M8 2v2" stroke="#222" stroke-dasharray="3 1" stroke-width="1.500"/><path d="M8 8h7v6H8z" fill="#fff"/><circle cx="11" cy="11" r="1.500"/></svg></button>
                <button aria-label="Analytical Model"><svg class="icon" viewBox="0 0 16 16"><path d="M2 5l4-3h8v4H2v8M6 6v8M10 6v8M2 9h8"/><path d="M2 7h8v7" stroke="#c82020"/><circle cx="13" cy="5" r="2.500" fill="#ffcf4a" stroke="#e08a10"/></svg></button>
                <button aria-label="Displacement"><svg class="icon" viewBox="0 0 16 16"><path d="M2 6l4-4h9v7l-4 5H5V6zM5 6h7v8M12 6l3-4M1 6h3v5H1z" fill="#ddd"/></svg></button>
                <button aria-label="Constraints"><svg class="icon" viewBox="0 0 16 16"><path d="M1 1v14M15 1v8M1 4h14" stroke-dasharray="3 1"/><path d="M8 9h7v5H8zM10 9V7h3v2" fill="#888"/></svg></button>
                <i class="arrow left"></i>
                <div class="hscroll page"><i class="thumb-bar"></i><i class="arrow right"></i></div>
                <svg class="grip" viewBox="0 0 8 8"><path d="M6 0h2v2H6zM3 3h2v2H3zM6 3h2v2H6zM0 6h2v2H0zM3 6h2v2H3zM6 6h2v2H6z" fill="#bbb"/></svg>
            </div>
        </section>
    </main>

    <div class="status">
        <span class="hint">Click to select, TAB for alternates, CTRL adds, SHIFT unselects.</span>
        <button class="tool" aria-label="Worksets"><svg class="icon" viewBox="0 0 16 16"><path d="M1 8l4-2 4 2v5l-4 2-4-2z" fill="#9bd0f5" stroke="#1a6cb0"/><path d="M4 5V2h6v4l-3 2" stroke="#1a8a3c" stroke-width="1.500"/><path d="M11 5v3l2 1v6m2-10v3l-2 1" stroke="#30388a" stroke-width="1.400"/></svg></button>
        <select class="combo workset" aria-label="Active workset"><option></option></select>
        <span class="requests"><svg class="icon dim" viewBox="0 0 16 16"><path d="M3 1h12v4l-6 2v3M3 1v4h9M1 14l8-4M2 15h7" fill="#ccc"/></svg>:0</span>
        <button class="tool" aria-label="Design Options"><svg class="icon"><use href="#winlist"/></svg></button>
        <button class="tool" aria-label="Exclude Options"><svg class="icon dim" viewBox="0 0 16 16"><path d="M1 3h14v12H5z" fill="#aaa" stroke="none"/><path d="M1 5h8M9 5v7M6 9l3 3 3-3" stroke="#eee"/></svg></button>
        <select class="combo option-set" aria-label="Design option"><option>Main Model</option></select>
        <div class="status-right">
            <button class="tool" aria-label="Select Links"><svg class="icon" viewBox="0 0 16 16"><rect x="1" y="3" width="6" height="5" rx="2" stroke="#d9920f" stroke-width="1.600"/><rect x="9" y="2" width="6" height="5" rx="2" stroke="#d9920f" stroke-width="1.600"/><path d="M5 5h6" stroke="#d9920f" stroke-width="1.500"/><use href="#cursor" x="6" y="5" width="8" height="11"/></svg></button>
            <button class="tool" aria-label="Select Underlay"><svg class="icon" viewBox="0 0 16 16"><path d="M0 13h8M1 9l6-5M1 9h7" stroke="#1a6cb0" stroke-width="1.500"/><use href="#x-red" x="9" width="7" height="7"/><use href="#cursor" x="7" y="6" width="8" height="10"/></svg></button>
            <button class="tool" aria-label="Select Pinned"><svg class="icon" viewBox="0 0 16 16"><path d="M1 1h7v2H1zM3 4h4v4H3zM1 9h8M5 9v5" stroke="#d2641e"/><use href="#x-red" x="9" width="7" height="7"/><use href="#cursor" x="7" y="6" width="8" height="10"/></svg></button>
            <button class="tool" aria-label="Select by Face"><svg class="icon" viewBox="0 0 16 16"><path d="M2 3l6-2v11l-6 3z" fill="#a9d5f5" stroke="#1a6cb0"/><use href="#x-red" x="9" width="7" height="7"/><use href="#cursor" x="7" y="6" width="8" height="10"/></svg></button>
            <button class="tool" aria-label="Drag Elements"><svg class="icon" viewBox="0 0 16 16"><path d="M5 0v9M1 5h9M3 2l2-2 2 2M3 7l2 2 2-2M2 3L0 5l2 2M8 3l2 2-2 2" stroke="#222"/><use href="#cursor" x="8" y="5" width="8" height="11"/></svg></button>
            <button class="tool" aria-label="Background Processes"><svg class="icon" viewBox="0 0 16 16"><circle cx="8" cy="8" r="5" stroke="#999" stroke-width="3" stroke-dasharray="3 1"/></svg></button>
            <span class="requests filter"><svg class="icon" viewBox="0 0 16 16"><path d="M1 2h14L9 9v6H7V9z" fill="#bbb"/></svg>:0</span>
        </div>
    </div>

    <footer class="taskbar">
        <button class="task start" aria-label="Start"><svg width="16" height="16" viewBox="0 0 16 16"><path d="M0 2l7-1v6H0zM8 1l8-1v7H8zM0 8h7v7l-7-1zM8 8h8v8l-8-1z" fill="#fff"/></svg></button>
        <label class="search"><svg width="17" height="17" viewBox="0 0 17 17"><circle cx="10" cy="7" r="5.500" fill="none" stroke="#222" stroke-width="1.300"/><path d="M6 11l-5 5" stroke="#222" stroke-width="1.300"/></svg>
            <input type="text" placeholder="Type here to search" aria-label="Search">
            <svg class="scene" width="72" height="38" viewBox="0 0 72 38"><path d="M48 38V17l12-9h12v30z" fill="#d8aa68"/><path d="M46 18L60 7h12v6L58 14z" fill="#8395b8"/><path d="M14 38V16h33v22z" fill="#c98d77"/><path d="M12 17l8-7h22l7 7z" fill="#8ba0c6"/><path d="M26 10h8V4l-4-4-4 4z" fill="#7a8296"/><path d="M23 17l7-6 8 6z" fill="#e4c8bb"/><path d="M18 19v13M23 19v13M28 19v13M33 19v13M38 19v13M43 19v13" stroke="#fff1dc" stroke-width="2"/><path d="M52 20v4M57 20v4M62 19v4M67 19v4M53 28v5M60 28v5M67 28v5" stroke="#79542c" stroke-width="2"/><path d="M11 8l4 9h-2l4 8h-2l3 9H3l3-9H4l5-8H7z" fill="#2f8551"/><path d="M7 17l8-2M5 25l11-2M4 32l14-2" stroke="#e6f4f4" stroke-width="2"/><path d="M11 5l1 3 3 0-3 2-1 3-1-3-3-2 3 0z" fill="#f5b52e"/><path d="M0 35c20-4 40 2 72-3v6H0z" fill="#b9d3ee"/></svg></label>
        <button class="task task-view" aria-label="Task View"><svg width="18" height="16" viewBox="0 0 18 16"><path d="M1 0v3h10V0M1 16v-3h10v3M1 5h10v6H1zM15 0v16" fill="none" stroke="#fff"/><path d="M14 4h3v3h-3z" fill="#fff"/></svg></button>
        <button class="task" aria-label="Edge"><svg width="26" height="26" viewBox="0 0 26 26"><circle cx="13" cy="13" r="12" fill="#1a7fd0"/><path d="M1 12C2 0 22-2 25 10c1 6-5 8-9 7 5-9-8-10-15-5z" fill="#38c9b8"/><path d="M10 12c-6 5 0 14 11 11-5 4-18 2-19-6 0-5 6-7 8-5z" fill="#0c55a0"/><path d="M12 12c-3 3 0 9 10 8 2-1 2 0 1 1-4 3-15 1-11-9z" fill="#25231f"/></svg></button>
        <button class="task running" aria-label="File Explorer"><svg width="24" height="22" viewBox="0 0 24 22"><path d="M1 2h8l2 3h11v15H1z" fill="#e8a32c"/><path d="M1 7h21v13H1z" fill="#fbd462"/><path d="M5 20v-8h14v8h-4v-4H9v4z" fill="#2b8ae0"/></svg></button>
        <button class="task" aria-label="Mail"><svg width="26" height="24" viewBox="0 0 26 24"><path d="M1 9L13 1l12 8v13H1z" fill="#1768b8"/><path d="M4 9h18v9H4z" fill="#e8eef4"/><path d="M1 9l12 7 12-7v14H1z" fill="#35b3ee"/><path d="M1 23l12-8 12 8z" fill="#1a8ade"/></svg></button>
        <button class="task" aria-label="Microsoft 365"><svg width="22" height="24" viewBox="0 0 22 24"><path d="M11 1l9 5v11l-9 6-9-5V6z" fill="#6c62d8"/><path d="M2 6l9-5 4 3-6 5v9l-7-2z" fill="#5aa5ee"/><path d="M8 23l12-6V9l-6 7-9 2z" fill="#a58af0"/><path d="M11 8l4 2v4l-4 3-4-3v-4z" fill="#2a2825"/></svg></button>
        <button class="task" aria-label="WordPad"><svg width="20" height="24" viewBox="0 0 20 24"><path d="M1 2h17v19H1z" fill="#cfe3f6"/><path d="M1 1h17v3H1z" fill="#6f9fc9"/><path d="M11 8h6M11 11h6M3 18h14" stroke="#5e88b8"/><path d="M2 20h17l-2 3H3z" fill="#b7c7da"/><text x="3" y="15" font-size="11" fill="#d07018">A</text></svg></button>
        <button class="task running" aria-label="Chrome"><svg width="24" height="24" viewBox="0 0 24 24"><circle cx="12" cy="12" r="12" fill="#fbc116"/><path d="M12 12L1.600 6A12 12 0 0 1 22.400 6z" fill="#e33b2e"/><path d="M12 12v12A12 12 0 0 1 1.600 6z" fill="#2ba14b"/><circle cx="12" cy="12" r="5.500" fill="#fff"/><circle cx="12" cy="12" r="4.300" fill="#3b7ce0"/></svg></button>
        <button class="task running" aria-label="WhatsApp"><svg width="26" height="26" viewBox="0 0 26 26"><path d="M2 24l2-6a11 11 0 1 1 4 4z" fill="none" stroke="#2bc45a" stroke-width="2.400"/><path d="M8 8c1-2 3-1 3 1l-1 2c1 2 2 3 4 4l2-1c2 1 2 3 0 4-4 1-10-5-8-10z" fill="#2bc45a"/></svg><span class="badge">1</span></button>
        <button class="task" aria-label="Store"><svg width="24" height="24" viewBox="0 0 24 24"><path d="M7 6V2h10v4" fill="none" stroke="#2aa2e8" stroke-width="2"/><rect x="1" y="5" width="22" height="18" rx="3" fill="#f4f6f8"/><path d="M8 9h4v4H8z" fill="#f25022"/><path d="M13 9h4v4h-4z" fill="#7fba00"/><path d="M8 14h4v4H8z" fill="#1ba1e2"/><path d="M13 14h4v4h-4z" fill="#ffb900"/></svg></button>
        <button class="task running current" aria-label="Revit"><svg width="24" height="24" viewBox="0 0 24 24"><path d="M0 0h24v24H0z" fill="#cfe4f5"/><path d="M5 3h9c7 0 6 9 2 10l4 8h-5l-4-7H9v7H5z" fill="#1c4f9c"/><path d="M9 7h4c3 0 3 4 0 4H9z" fill="#cfe4f5"/></svg></button>
        <div class="tray">
            <button class="weather"><svg width="26" height="26" viewBox="0 0 26 26"><path d="M9 2c1 6 5 9 11 8-2 5-9 7-13 3-3-3-1-9 2-11z" fill="#f3b135"/><path d="M6 24c-7 0-6-9 0-8 2-6 10-5 11 0 7-1 9 8 2 8z" fill="#b9d9f6"/><circle cx="18" cy="7" r="6" fill="#cc1f1f"/><text x="16" y="11" font-size="9" fill="#fff">1</text></svg>15°C</button>
            <svg class="tray-icon" viewBox="0 0 16 16"><path d="M2 11l6-6 6 6"/></svg>
            <svg class="tray-icon" viewBox="0 0 16 16"><path d="M3 5h8v7H3zM11 7l3-1v5l-3-1M4 2c2-1 4-1 6 0M4 15c2 1 4 1 6 0"/></svg>
            <svg class="tray-icon" viewBox="0 0 16 16"><path d="M7 5h8v7H5M9 7l4 3M13 7l-4 3M1 3v3h4V3M2 1v2M4 1v2M3 6v5"/></svg>
            <svg class="tray-icon" viewBox="0 0 16 16"><path d="M3 14A11 11 0 0 1 14 3M6 14a8 8 0 0 1 8-8M9 14a5 5 0 0 1 5-5" stroke="#ccc"/><circle cx="13" cy="13" r="1.500" fill="#fff"/></svg>
            <svg class="tray-icon" viewBox="0 0 18 16"><path d="M1 6v4h3l4 3V3L4 6zM10 6c1 1 1 3 0 4M12 4c2 2 2 6 0 8M15 2c3 3 3 9 0 12"/></svg>
            <span class="lang">ع</span>
            <time class="clock">4:37 AM<br>12/24/2023</time>
            <button class="notif" aria-label="Notifications"><svg width="16" height="16" viewBox="0 0 16 16"><path d="M0 0h16v13h-5v3l-3-3H0z" fill="#fff"/><path d="M3 3h10M3 6h10M3 9h8" stroke="#333"/></svg><span class="badge">3</span></button>
        </div>
    </footer>

    <div class="watermark" aria-hidden="true"><span class="wm-ar">مستقل</span><span class="wm-en">mostaql.com</span></div>
</body>
</html>
```
FILE: styles.css
```css
* {
    box-sizing: border-box;
}
body {
    margin: 0;
    height: 100vh;
    display: flex;
    flex-direction: column;
    overflow: hidden;
    background: #eee;
    color: #3a3a3a;
    font-family: "Open Sans", "Noto Sans", "DejaVu Sans", sans-serif;
    font-size: 12px;
    line-height: 16px;
}
button, select, input {
    font: inherit;
    color: inherit;
    margin: 0;
}
button {
    border: 0;
    padding: 0;
    background: none;
    white-space: nowrap;
}
button:disabled {
    color: #a8a8a8;
}
h1, h2 {
    margin: 0;
    font-size: 12px;
    font-weight: normal;
}
.defs {
    position: absolute;
    width: 0;
    height: 0;
}
.icon, .icon32 {
    width: 16px;
    height: 16px;
    flex: none;
    fill: none;
    stroke: #444;
    display: block;
}
.icon32 {
    width: 32px;
    height: 32px;
}
.icon.logo {
    width: 18px;
    height: 18px;
    stroke: none;
}
.dim {
    stroke: #888;
}
.faint {
    stroke: #b0b0b0;
}
.blue {
    stroke: #1269c0;
}
.soft {
    opacity: 0.6;
}
.caret {
    display: inline-block;
    flex: none;
    border: 3px solid transparent;
    border-top: 4px solid #444;
    border-bottom: 0;
}
.caret.wide {
    border-width: 4px 4px 0;
}
.caret.dark {
    border-top-color: #111;
}
.caret.pale {
    border-top-color: #999;
}

/* title bar */
.titlebar {
    display: flex;
    align-items: center;
    height: 29px;
    padding-bottom: 5px;
    background: #cbcbcb;
    flex: none;
}
.qat, .account {
    display: flex;
    align-items: center;
}
.tool {
    width: 24px;
    height: 24px;
    flex: none;
    display: flex;
    align-items: center;
    justify-content: center;
}
.tool.open {
    margin-left: 4px;
}
.tool.letter {
    font-size: 18px;
    font-weight: bold;
}
.caret-slot {
    width: 12px;
    display: flex;
    justify-content: center;
}
.caret-slot::after {
    content: "";
    border: 3px solid transparent;
    border-top: 4px solid #444;
    border-bottom: 0;
}
.sep {
    width: 1px;
    height: 20px;
    margin: 0 3px;
    background: #aaa;
}
.doc-title {
    flex: 1;
    text-align: center;
    padding: 0 12px 4px 0;
    white-space: nowrap;
    overflow: hidden;
    color: #444;
}
.account .caret-left {
    border: 4px solid transparent;
    border-right-color: #444;
    border-left: 0;
    margin-right: 5px;
}
.user {
    display: flex;
    align-items: center;
    gap: 4px;
    font-size: 11px;
}
.cart {
    margin: 0 2px 0 7px;
}
.help {
    width: 17px;
    height: 17px;
    line-height: 15px;
    border: 1px solid #333;
    border-radius: 50%;
    background: #fff;
    color: #1269c0;
    font-weight: bold;
    margin: 0 9px 0 6px;
}
.win-buttons {
    display: flex;
    gap: 1px;
    margin-left: 55px;
}

/* ribbon tabs */
.tabs {
    display: flex;
    height: 20px;
    flex: none;
    background: #cbcbcb;
}
.tab {
    padding: 0 9px 0 8px;
}
.tab.file {
    width: 45px;
    margin-right: 4px;
    background: #2a78ba;
    color: #fff;
}
.tab.active {
    background: #eee;
}
.collapse {
    display: flex;
    align-items: center;
    gap: 4px;
    margin-left: 22px;
}
.collapse-box {
    width: 15px;
    height: 9px;
    border: 1px solid #444;
    border-radius: 3px;
    background: #fff;
    display: flex;
    align-items: center;
    justify-content: center;
}
.collapse-box::after {
    content: "";
    border: 2px solid transparent;
    border-bottom: 3px solid #333;
    border-top: 0;
}

/* ribbon */
.ribbon {
    display: flex;
    height: 95px;
    flex: none;
    background: #eee;
}
.panel {
    display: flex;
    flex-direction: column;
    border-right: 1px solid #d2d2d2;
}
.panel-body {
    display: flex;
    height: 76px;
    padding-top: 3px;
}
.panel-title {
    display: flex;
    align-items: center;
    justify-content: center;
    gap: 6px;
    height: 18px;
}
.select-panel {
    width: 57px;
}
.graphics {
    width: 357px;
    position: relative;
}
.presentation {
    width: 124px;
    padding-left: 7px;
}
.create {
    width: 329px;
}
.sheet {
    width: 112px;
}
.windows {
    width: 271px;
    border-right: 0;
}
.big {
    display: flex;
    flex-direction: column;
    align-items: center;
    gap: 3px;
    padding-top: 3px;
    line-height: 15px;
    flex: none;
}
.modify {
    width: 45px;
    height: 72px;
    margin-left: 6px;
    border: 1px solid #0f62b0;
    background: #b9d7f1;
}
.templates {
    width: 61px;
    margin-left: 8px;
}
.caret.low {
    margin: 53px 0 0 -3px;
    align-self: flex-start;
}
.view3d {
    width: 44px;
    margin-left: 4px;
}
.big.section {
    width: 46px;
    margin-left: -2px;
}
.callout {
    width: 57px;
}
.switch {
    width: 58px;
    margin-left: 7px;
}
.inactive {
    width: 50px;
    margin-left: -1px;
}
.tabv, .tile {
    width: 38px;
}
.divider {
    width: 1px;
    height: 73px;
    margin: 0 8px 0 4px;
    background: #ccc;
}
.ui {
    width: 60px;
}
.rows {
    display: flex;
    flex-direction: column;
}
.vg {
    width: 132px;
    margin-left: 5px;
}
.row {
    display: flex;
    align-items: center;
    gap: 5px;
    height: 24px;
}
.graphics .row {
    gap: 4px;
}
.plans {
    margin-left: 6px;
    width: 101px;
}
.narrow {
    width: 35px;
}
.sheet .panel-body {
    display: grid;
    grid-template-columns: 25px 25px 30px;
    grid-auto-rows: 24px;
    padding-left: 16px;
}
.cell {
    display: flex;
    align-items: center;
}
.cell:nth-child(7) {
    grid-column: 2;
}
.cell.caret-cell {
    gap: 5px;
}
.launcher {
    position: absolute;
    right: 4px;
    bottom: 6px;
    width: 8px;
    height: 8px;
}
.options-bar {
    height: 29px;
    flex: none;
    border-top: 1px solid #c4c4c4;
    border-bottom: 1px solid #c4c4c4;
}

/* palettes */
.workspace {
    display: flex;
    flex: 1;
    min-height: 0;
}
.side {
    width: 221px;
    flex: none;
    display: flex;
    flex-direction: column;
    border-right: 3px solid #c8c8c8;
    color: #222;
}
.palette-head {
    display: flex;
    justify-content: space-between;
    align-items: center;
    height: 20px;
    padding: 2px 4px 0 3px;
    color: #333;
}
.palette-head h2 {
    white-space: nowrap;
}
.browser .palette-head h2 {
    font-size: 11px;
}
.close {
    display: block;
    line-height: 0;
}
.close svg {
    width: 10px;
    height: 10px;
    stroke: #222;
    stroke-width: 1.6;
}
.type-selector {
    display: flex;
    align-items: center;
    width: 216px;
    height: 73px;
    margin-left: 1px;
    padding: 2px;
    border: 1px solid #ccc;
}
.type-selector .caret {
    margin-left: auto;
}
.thumb {
    display: flex;
    align-items: center;
    justify-content: center;
    width: 66px;
    height: 66px;
    margin-right: 4px;
    border: 1px solid #ccc;
}
.instance {
    display: flex;
    align-items: center;
    height: 24px;
    gap: 6px;
    padding-left: 1px;
}
.instance select {
    width: 134px;
    height: 23px;
    padding: 0;
    border: 1px solid #999;
    background: #ddd;
}
select {
    appearance: none;
    border-radius: 0;
}
.instance select, .combo {
    background-image: linear-gradient(45deg, transparent 50%, #666 50%, #666 60%, transparent 60%), linear-gradient(-45deg, transparent 50%, #666 50%, #666 60%, transparent 60%);
    background-size: 5px 6px;
    background-position: right 9px center, right 4px center;
    background-repeat: no-repeat;
    padding-left: 3px;
}
.edit-type {
    display: flex;
    gap: 5px;
    align-items: center;
}
.grid-wrap {
    display: flex;
    height: 121px;
}
.grid-clip {
    width: 201px;
    overflow: hidden;
}
.grid {
    width: 199px;
    margin-left: 1px;
    table-layout: fixed;
    border-collapse: collapse;
    background: #fff;
    color: #000;
}
.grid tr {
    height: 18px;
}
.grid th, .grid td {
    padding: 0 0 0 7px;
    height: 18px;
    text-align: left;
    font-weight: normal;
    white-space: nowrap;
    border-bottom: 1px dotted #777;
    border-right: 1px dotted #777;
    line-height: 14px;
}
.grid th {
    width: 94px;
}
.grid td {
    padding-left: 1px;
}
.grid .assoc {
    width: 12px;
}
.grid .group th, .grid .group td {
    background: #dcdcdc;
    padding-left: 2px;
    border-right: 0;
}
.grid .group svg {
    display: block;
    width: 8px;
    height: 10px;
    margin-left: -3px;
}
.grid .off {
    color: #888;
}
.grid input {
    appearance: none;
    display: block;
    width: 13px;
    height: 13px;
    margin: 2px 0 0 1px;
    border: 1px solid #222;
    background: #fff;
}
.vscroll {
    width: 16px;
    display: flex;
    flex-direction: column;
    align-items: center;
    background: #eee;
}
.vscroll .thumb-bar {
    width: 15px;
    background: #cacaca;
}
.thumb-bar.short {
    height: 17px;
    margin-top: 25px;
}
.thumb-bar.tall {
    height: 93px;
    margin-top: 72px;
}
.thumb-bar.mid {
    height: 18px;
    margin-top: 224px;
}
.arrow {
    width: 6px;
    height: 6px;
    flex: none;
    border: solid #444;
    border-width: 2px 0 0 2px;
}
.arrow.up {
    margin-top: 8px;
    transform: rotate(45deg);
}
.arrow.down {
    margin: auto 0 7px;
    transform: rotate(225deg);
}
.arrow.left {
    transform: rotate(-45deg);
}
.arrow.right {
    transform: rotate(135deg);
}
.prop-foot {
    display: flex;
    justify-content: space-between;
    height: 28px;
    padding: 3px 3px 0;
    border-bottom: 1px solid #c0c0c0;
}
.prop-foot a {
    color: #0066cc;
    margin-top: 1px;
}
.prop-foot button {
    width: 73px;
    height: 21px;
    background: #ccc;
    border: 1px solid #bfbfbf;
    color: #888;
}
.browser {
    display: flex;
    flex-direction: column;
    flex: 1;
    min-height: 0;
    padding-top: 1px;
}
.tree-wrap {
    display: flex;
    flex: 1;
    min-height: 0;
}
.tree {
    flex: 1;
    margin: 0 0 0 1px;
    padding: 0 0 0 8px;
    overflow: hidden;
    list-style: none;
    background: #fff repeating-linear-gradient(#999 0 1px, #fff 1px 2px) 8px 0 / 1px 100% no-repeat;
    color: #000;
    font-size: 11px;
}
.tree li {
    display: flex;
    align-items: center;
    height: 18px;
    white-space: nowrap;
}
.tree .l1 span {
    margin-left: 6px;
}
.tree .l2 {
    padding-left: 16px;
    background: repeating-linear-gradient(#999 0 1px, #fff 1px 2px) 20px 0 / 1px 100% no-repeat;
}
.tree .l2.leaf {
    padding-left: 20px;
}
.tree .l2.leaf .dots {
    width: 15px;
    margin-right: 3px;
}
.tree .l3 {
    padding-left: 40px;
}
.tree .l3 .dots {
    width: 15px;
    margin-right: 3px;
}
.dots {
    width: 10px;
    margin-right: 3px;
    border-top: 1px dotted #888;
    flex: none;
}
.tree .l1 .dots {
    width: 12px;
    margin-right: 0;
}
.tree .l1 .dots.tiny {
    width: 6px;
}
.tree .open-node {
    margin-left: -4px;
}
.open-node .icon {
    margin-left: 1px;
}
.box {
    width: 9px;
    height: 9px;
    border: 1px solid #999;
    background: #fff;
    color: #2244aa;
    font-style: normal;
    font-size: 9px;
    line-height: 7px;
    text-align: center;
    flex: none;
}
.selected {
    background: #dedede;
    padding: 1px 3px;
    margin-left: -3px;
}
.hscroll {
    display: flex;
    align-items: center;
    height: 17px;
}
.side .hscroll {
    padding-left: 7px;
}
.hscroll .thumb-bar {
    height: 15px;
    background: #cacaca;
}
.side .hscroll .thumb-bar {
    width: 158px;
    margin: 0 13px 0 5px;
}

/* drawing area */
.view-area {
    flex: 1;
    min-width: 0;
    display: flex;
    flex-direction: column;
}
.view-tabs {
    display: flex;
    height: 20px;
    background: #cbcbcb;
    flex: none;
}
.vtab {
    display: flex;
    align-items: center;
    gap: 7px;
    width: 128px;
    padding-left: 5px;
    color: #555;
    font-size: 11px;
}
.vtab.active {
    background: #fff;
    color: #111;
    font-size: 12px;
}
.vtab.active .close {
    margin: 0 5px 0 auto;
}
.vtab.long {
    width: 153px;
}
.tab-menu {
    margin: 0 4px 0 auto;
}
.canvas-row {
    display: flex;
    flex: 1;
    min-height: 0;
}
.canvas {
    flex: 1;
    min-width: 0;
    position: relative;
    background: #fff;
}
.model {
    display: block;
    width: 100%;
    height: 100%;
    fill: none;
    shape-rendering: crispEdges;
}
.levels {
    stroke: #000;
    stroke-dasharray: 10 3 2 3;
}
.marks {
    stroke: #000;
    shape-rendering: auto;
}
.marks text {
    stroke: none;
    fill: #000;
    font-family: "DejaVu Sans", sans-serif;
    font-size: 6px;
    text-anchor: end;
}
.solid {
    stroke: #000;
}
.dk, .hole {
    fill: #2c2c2c;
}
.lt {
    fill: #868686;
}
.ln {
    stroke: #000;
}
.recess {
    stroke: #7a4018;
    stroke-width: 2;
}
.orange {
    stroke: #f58c34;
}
.red {
    stroke: #d01010;
}
.green {
    stroke: #0a7a0a;
}
.specks {
    stroke: #000;
    stroke-dasharray: 1 7;
}
.viewcube {
    position: absolute;
    right: 16px;
    top: 41px;
    width: 94px;
}
.cube-text {
    font-size: 7px;
    fill: #999;
    font-family: "Liberation Sans", sans-serif;
}
.cube-text .tiny {
    font-size: 5px;
}
.viewcube svg, .navbar svg {
    display: block;
}
.navbar {
    position: absolute;
    right: 1px;
    top: 120px;
    width: 36px;
}
.view-control {
    display: flex;
    align-items: center;
    height: 18px;
    background: #eee;
    border-bottom: 1px solid #fff;
    flex: none;
}
.view-control button {
    margin-right: 5px;
}
.view-control .scale {
    width: 81px;
    margin: 0;
    color: #000;
}
.view-control > .arrow {
    margin-left: 5px;
}
.hscroll.page {
    flex: 1;
}
.hscroll.page .thumb-bar {
    width: 17px;
    margin-left: auto;
    margin-right: 357px;
}
.grip {
    width: 8px;
    height: 8px;
    margin: 6px 2px 0 13px;
}

/* status bar */
.status {
    display: flex;
    align-items: center;
    height: 24px;
    padding-top: 2px;
    flex: none;
    background: #cbcbcb;
    color: #222;
}
.hint {
    width: 338px;
    padding-left: 2px;
    white-space: nowrap;
    font-size: 11px;
}
.combo {
    height: 18px;
    border: 1px solid #fff;
    background-color: #fff;
    color: #999;
    margin-left: 4px;
    padding-top: 0;
    padding-bottom: 0;
}
.workset {
    width: 205px;
    margin-right: 7px;
}
.requests {
    display: flex;
    align-items: center;
    gap: 4px;
    width: 50px;
}
.option-set {
    width: 205px;
}
.status-right {
    display: flex;
    align-items: center;
    gap: 2px;
    margin: 0 72px 0 auto;
}
.requests.filter {
    width: 26px;
    gap: 0;
    margin-left: 2px;
}

/* taskbar */
.taskbar {
    display: flex;
    height: 40px;
    flex: none;
    background: #282624;
    color: #fff;
}
.task {
    width: 48px;
    margin-right: 1px;
    display: flex;
    align-items: center;
    justify-content: center;
    position: relative;
}
.task.start {
    margin: 0;
}
.task.task-view {
    margin-right: 3px;
}
.task.running::after {
    content: "";
    position: absolute;
    bottom: 0;
    left: 4px;
    right: 4px;
    height: 2px;
    background: #76b9ed;
}
.task.current {
    background: #55534f;
}
.task.current::after {
    left: 0;
    right: 0;
}
.search {
    display: flex;
    align-items: center;
    width: 288px;
    height: 39px;
    margin-top: 1px;
    padding-left: 12px;
    background: #f2f2f2;
    color: #444;
}
.search input {
    width: 188px;
    border: 0;
    padding: 0 0 0 11px;
    background: none;
    font-size: 14px;
}
.search input::placeholder {
    color: #444;
}
.scene {
    flex: none;
    margin-left: auto;
}
.badge {
    position: absolute;
    right: 3px;
    bottom: 5px;
    width: 17px;
    height: 17px;
    border: 1px solid #aaa;
    border-radius: 50%;
    background: #2c2a28;
    font-size: 11px;
    line-height: 15px;
    text-align: center;
}
.tray {
    display: flex;
    align-items: center;
    margin-left: auto;
}
.weather {
    display: flex;
    align-items: center;
    gap: 8px;
    margin-right: 22px;
    font-size: 14px;
}
.tray-icon {
    width: 17px;
    height: 16px;
    margin-right: 8px;
    fill: none;
    stroke: #fff;
    stroke-width: 1.2;
}
.lang {
    width: 20px;
    margin-left: 4px;
    font-size: 14px;
}
.clock {
    width: 74px;
    text-align: center;
    line-height: 18px;
}
.notif {
    position: relative;
    width: 48px;
    height: 40px;
    display: flex;
    align-items: center;
    padding-left: 9px;
}
.notif .badge {
    right: 15px;
    bottom: 4px;
}

.watermark {
    position: fixed;
    left: 600px;
    bottom: 14px;
    width: 166px;
    display: flex;
    flex-direction: column;
    align-items: center;
    color: rgba(170, 170, 170, 0.4);
    pointer-events: none;
    font-weight: bold;
}
.wm-ar {
    font-family: "DejaVu Sans", sans-serif;
    font-size: 50px;
    line-height: 56px;
}
.wm-en {
    font-family: "Liberation Sans", sans-serif;
    font-size: 27px;
    line-height: 28px;
}
```
